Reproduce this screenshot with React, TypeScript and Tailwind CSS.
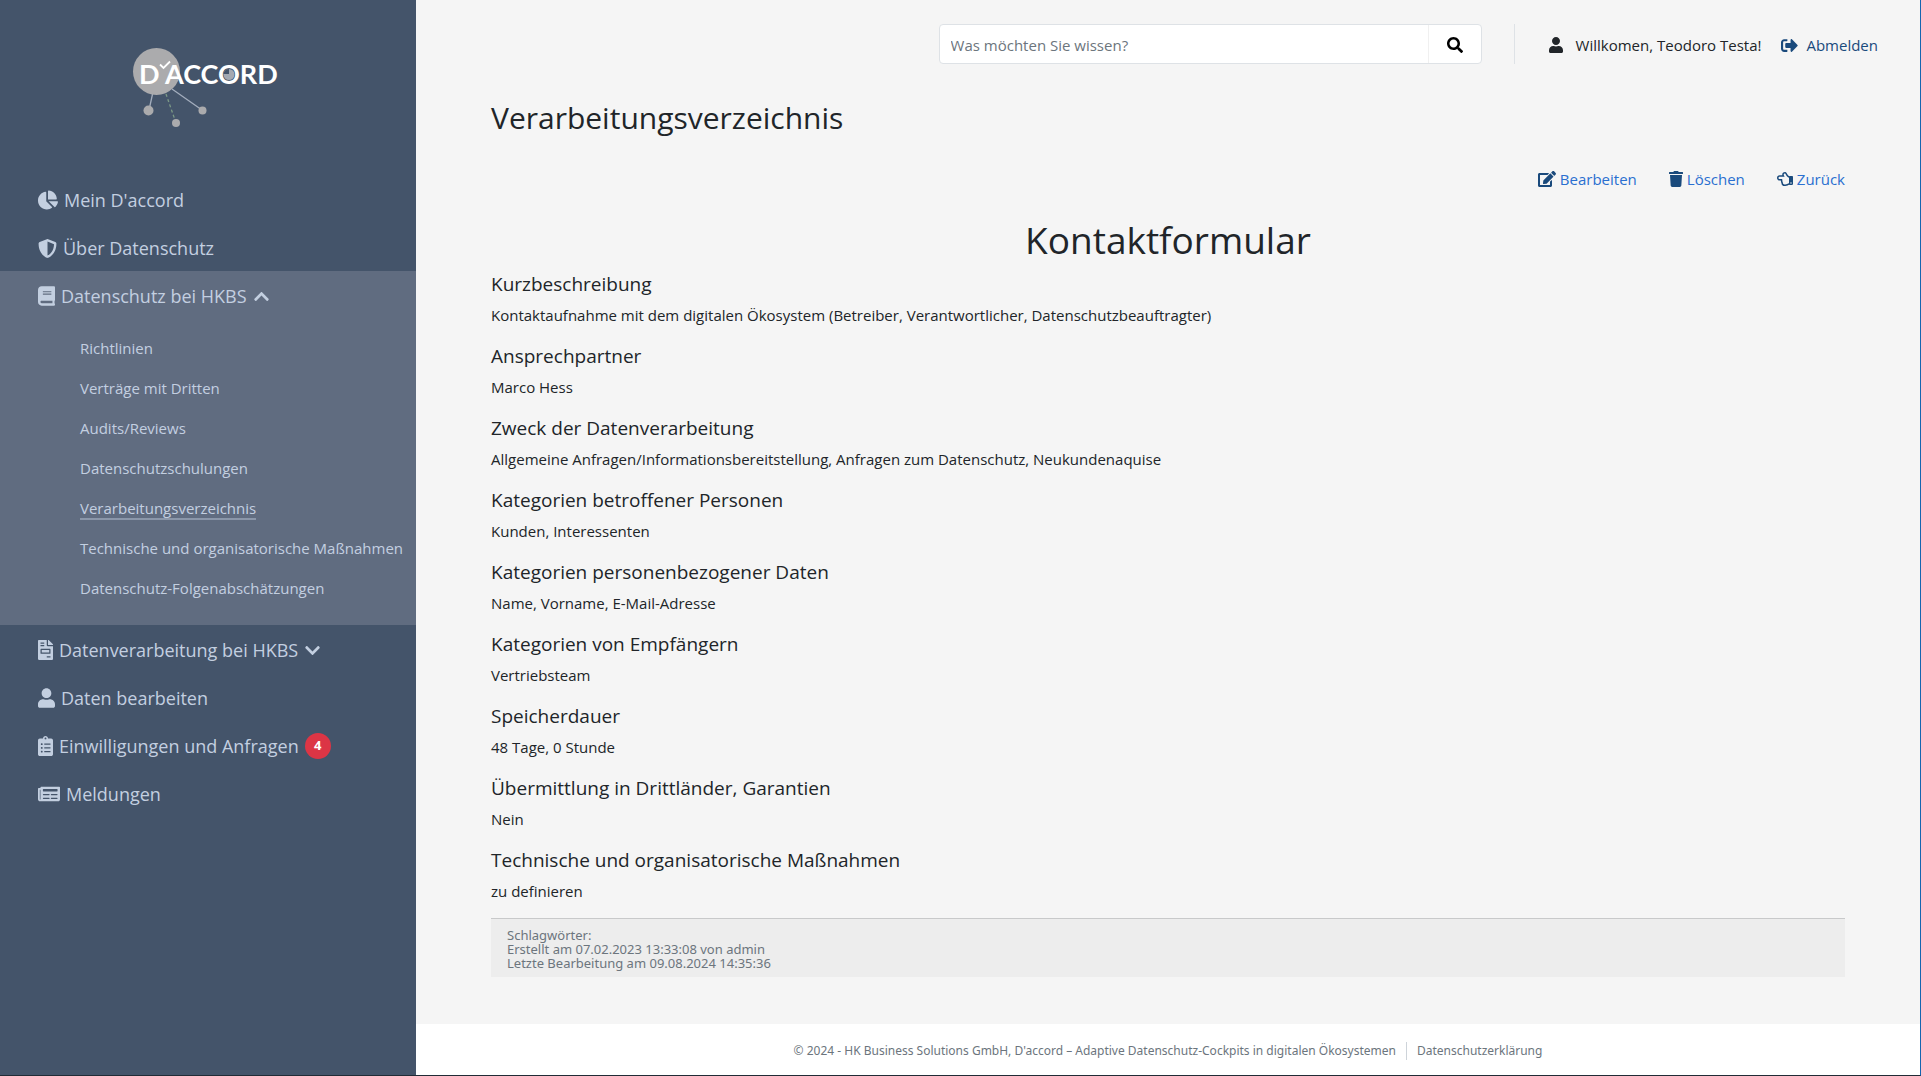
import React from "react";
import {
  FaChartPie,
  FaShieldAlt,
  FaBook,
  FaChevronUp,
  FaChevronDown,
  FaFileInvoice,
  FaUser,
  FaClipboardList,
  FaNewspaper,
  FaSearch,
  FaSignOutAlt,
  FaEdit,
  FaTrash,
  FaRegHandPointLeft,
} from "react-icons/fa";

const submenu = [
  "Richtlinien",
  "Verträge mit Dritten",
  "Audits/Reviews",
  "Datenschutzschulungen",
  "Verarbeitungsverzeichnis",
  "Technische und organisatorische Maßnahmen",
  "Datenschutz-Folgenabschätzungen",
];

const sections = [
  ["Kurzbeschreibung", "Kontaktaufnahme mit dem digitalen Ökosystem (Betreiber, Verantwortlicher, Datenschutzbeauftragter)"],
  ["Ansprechpartner", "Marco Hess"],
  ["Zweck der Datenverarbeitung", "Allgemeine Anfragen/Informationsbereitstellung, Anfragen zum Datenschutz, Neukundenaquise"],
  ["Kategorien betroffener Personen", "Kunden, Interessenten"],
  ["Kategorien personenbezogener Daten", "Name, Vorname, E-Mail-Adresse"],
  ["Kategorien von Empfängern", "Vertriebsteam"],
  ["Speicherdauer", "48 Tage, 0 Stunde"],
  ["Übermittlung in Drittländer, Garantien", "Nein"],
  ["Technische und organisatorische Maßnahmen", "zu definieren"],
];

const navRow = "flex h-12 w-full items-center gap-[6px] pt-0.5 pl-[38px] text-left text-[18px] text-[#c3cfe0] whitespace-nowrap";

function Logo() {
  return (
    <svg viewBox="0 0 200 110" className="h-[110px] w-[200px]" role="img" aria-label="D'ACCORD">
      <g stroke="#a3adbd" strokeWidth="1.3">
        <path d="M43 62L39 80M62 59L92 80" />
        <path d="M56 64L65 90" stroke="#7c9a86" strokeDasharray="3 2.5" />
      </g>
      <g fill="#ababad">
        <circle cx="46.500" cy="41.500" r="23.500" />
        <circle cx="38.500" cy="80.500" r="5" />
        <circle cx="92.500" cy="80.500" r="4" />
        <circle cx="66" cy="93" r="4" />
      </g>
      <g fill="#fff" fontFamily="Lato, sans-serif" fontWeight="700" fontSize="27">
        <text x="29" y="54">D</text>
        <text x="55" y="54">ACCORD</text>
      </g>
      <path d="M50 34.500L53.500 38L60 31.500" fill="none" stroke="#fff" strokeWidth="1.800" />
      <circle cx="119" cy="44.500" r="5.500" fill="#a3a9b3" />
      <path d="M119 44V39A5.500 5.500 0 0 0 113.500 44Z" fill="#44546a" />
    </svg>
  );
}

export default function App() {
  return (
    <div className="flex min-h-screen border-r border-b border-r-[#1565b0] border-b-[#212b36] bg-[#f5f5f5] font-['Open_Sans',sans-serif] text-[15px] text-[#212529]">
      <aside className="w-[416px] shrink-0 bg-[#44546a]">
        <a href="#start" className="block h-[175px] pt-[30px] pl-[110px]">
          <Logo />
        </a>
        <nav aria-label="Hauptmenü">
          <a href="#mein" className={navRow}><FaChartPie className="text-[20px]" />Mein D'accord</a>
          <a href="#ueber" className={navRow}><FaShieldAlt className="text-[19px]" />Über Datenschutz</a>
          <div className="bg-[#606c80] pb-[17px]">
            <button type="button" aria-expanded="true" className={navRow}>
              <FaBook className="h-5 w-[17px]" />Datenschutz bei HKBS<FaChevronUp className="text-[17px]" />
            </button>
            <ul className="pt-[9px] pl-20">
              {submenu.map((item) => (
                <li key={item} className="flex h-10 items-center whitespace-nowrap text-[#c3cfe0]">
                  <a
                    href="#eintrag"
                    className={
                      item === "Verarbeitungsverzeichnis"
                        ? "border-y-2 border-t-transparent border-b-[#8b97aa] leading-5"
                        : "leading-5"
                    }
                  >
                    {item}
                  </a>
                </li>
              ))}
            </ul>
          </div>
          <button type="button" aria-expanded="false" className={navRow}>
            <FaFileInvoice className="h-5 w-[15px]" />Datenverarbeitung bei HKBS<FaChevronDown className="text-[17px]" />
          </button>
          <a href="#daten" className={navRow}><FaUser className="h-5 w-[17px]" />Daten bearbeiten</a>
          <a href="#anfragen" className={navRow}>
            <FaClipboardList className="h-5 w-[15px]" />Einwilligungen und Anfragen
            <span className="flex size-[26px] items-center justify-center rounded-full bg-[#dc3545] text-[13px] font-bold text-white">4</span>
          </a>
          <a href="#meldungen" className={navRow}><FaNewspaper className="text-[22px]" />Meldungen</a>
        </nav>
      </aside>

      <div className="flex min-w-0 grow flex-col">
        <header className="flex items-center justify-end pt-6 pr-[42px]">
          <form role="search" className="flex h-10 w-[543px] overflow-hidden rounded border border-[#dee2e6] bg-white">
            <input
              type="search"
              aria-label="Suche"
              placeholder="Was möchten Sie wissen?"
              className="min-w-0 grow px-[11px] pt-0.5 outline-none placeholder:text-[#6c757d]"
            />
            <button type="button" aria-label="Suchen" className="flex w-[53px] items-center justify-center border-l border-[#f0f0f0] pt-0.5 text-black">
              <FaSearch className="text-[16px]" />
            </button>
          </form>
          <div className="ml-8 flex h-10 items-center border-l border-[#dee2e6] pt-0.5 pl-[34px]">
            <FaUser className="h-4 w-[14px]" />
            <span className="ml-[13px]">Willkomen, Teodoro Testa!</span>
            <a href="#abmelden" className="ml-5 flex items-center gap-2 text-[#1a4a7c]">
              <FaSignOutAlt className="text-[17px]" />Abmelden
            </a>
          </div>
        </header>

        <main className="grow px-[75px] pt-[34px]">
          <h1 className="text-[30px] leading-10">Verarbeitungsverzeichnis</h1>
          <div className="mt-[29px] flex h-6 items-center justify-end gap-8 text-[#2a6fd0]">
            <a href="#bearbeiten" className="flex items-center gap-1"><FaEdit className="text-[18px] text-[#1a4a7c]" />Bearbeiten</a>
            <a href="#loeschen" className="flex items-center gap-1"><FaTrash className="h-4 w-[14px] text-[#1a4a7c]" />Löschen</a>
            <a href="#zurueck" className="flex items-center gap-1"><FaRegHandPointLeft className="text-[16px] text-[#1a4a7c]" />Zurück</a>
          </div>
          <h2 className="mt-[25px] text-center text-[37px] leading-12">Kontaktformular</h2>
          <div className="mt-2">
            {sections.map(([title, text]) => (
              <section key={title} className="pb-[17px] last:pb-[15px]">
                <h3 className="text-[19px] leading-6">{title}</h3>
                <p className="mt-[7px] leading-6">{text}</p>
              </section>
            ))}
          </div>
          <div className="border-t border-[#c8c9ca] bg-[#ededed] px-4 pt-[9px] pb-[7px] font-['Noto_Sans',sans-serif] text-[13px] leading-[14px] text-[#6c757d]">
            <p>Schlagwörter:</p>
            <p>Erstellt am 07.02.2023 13:33:08 von admin</p>
            <p>Letzte Bearbeitung am 09.08.2024 14:35:36</p>
          </div>
        </main>

        <footer className="flex h-[51px] items-center justify-center bg-white pt-0.5 font-['Noto_Sans',sans-serif] text-[12px] text-[#6c757d]">
          <span className="pr-[10px]">© 2024 - HK Business Solutions GmbH, D'accord – Adaptive Datenschutz-Cockpits in digitalen Ökosystemen</span>
          <a href="#datenschutz" className="border-l border-[#ced4da] pl-[10px]">Datenschutzerklärung</a>
        </footer>
      </div>
    </div>
  );
}
